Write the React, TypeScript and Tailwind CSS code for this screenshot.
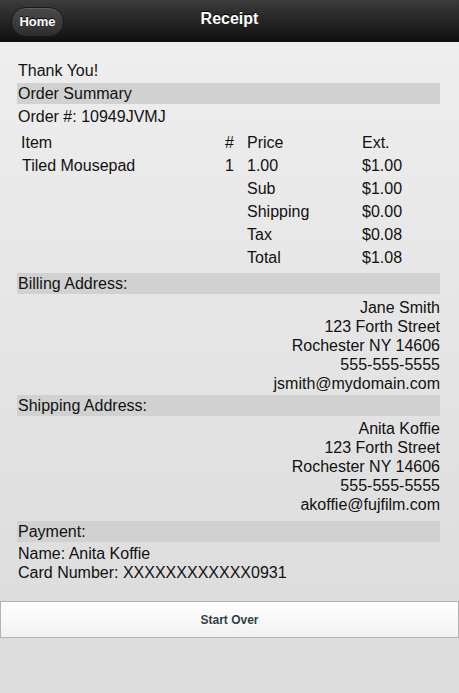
const font = { fontFamily: '"Liberation Sans", Arial, sans-serif' };

type Row = { item?: string; qty?: string; price: string; ext: string };

const rows: Row[] = [
	{ item: "Item", qty: "#", price: "Price", ext: "Ext." },
	{ item: "Tiled Mousepad", qty: "1", price: "1.00", ext: "$1.00" },
	{ price: "Sub", ext: "$1.00" },
	{ price: "Shipping", ext: "$0.00" },
	{ price: "Tax", ext: "$0.08" },
	{ price: "Total", ext: "$1.08" },
];

const billing = [
	"Jane Smith",
	"123 Forth Street",
	"Rochester NY 14606",
	"555-555-5555",
	"jsmith@mydomain.com",
];

const shipping = [
	"Anita Koffie",
	"123 Forth Street",
	"Rochester NY 14606",
	"555-555-5555",
	"akoffie@fujfilm.com",
];

const Bar = ({ label, className }: { label: string; className?: string }) => (
	<div className={`h-[21px] leading-[21px] bg-[#d1d1d1] pl-[1px] ${className ?? ""}`}>
		{label}
	</div>
);

const Address = ({ lines, className }: { lines: string[]; className?: string }) => (
	<div className={`flex flex-col items-end leading-[19px] ${className ?? ""}`}>
		{lines.map((l) => (
			<div key={l}>{l}</div>
		))}
	</div>
);

const App = () => {
	return (
		<div className="min-h-screen w-full bg-[#dddddd] text-[16px] text-[#111]" style={font}>
			{/* header */}
			<div className="relative h-[42px] border-b border-[#111] bg-gradient-to-b from-[#3c3c3c] to-[#111111] flex items-center justify-center">
				<button className="absolute left-[11px] top-[7px] h-[30px] w-[53px] rounded-full border border-[#1a1a1a] bg-gradient-to-b from-[#4a4a4a] to-[#2e2e2e] text-[13px] font-bold text-white shadow-[inset_0_1px_0_rgba(255,255,255,0.1)] [text-shadow:0_-1px_0_#000]">
					Home
				</button>
				<h1 className="text-[16px] font-bold text-white -mt-[3px] [text-shadow:0_-1px_0_#000]">Receipt</h1>
			</div>

			{/* content */}
			<div className="bg-gradient-to-b from-[#eeeeee] to-[#dddddd] pt-[18px] pl-[17px] pr-[19px] pb-[19px]">
				<div className="h-[21px] leading-[21px] pl-[1px]">Thank You!</div>
				<Bar label="Order Summary" className="mt-[2px]" />
				<div className="mt-[2px] h-[21px] leading-[21px] pl-[1px]">Order #: 10949JVMJ</div>

				<div className="mt-[4px] flex flex-col">
					{rows.map((r, i) => (
						<div key={i} className="flex h-[23px] leading-[23px]">
							<div className={`w-[204px] ${i === 0 ? "pl-[4px]" : "pl-[5px]"}`}>{r.item}</div>
							<div className="w-[22px] pl-[4px]">{r.qty}</div>
							<div className="w-[115px] pl-[4px]">{r.price}</div>
							<div className="flex-1 pl-[4px]">{r.ext}</div>
						</div>
					))}
				</div>

				<Bar label="Billing Address:" className="mt-[4px]" />
				<Address lines={billing} className="mt-[4px]" />

				<Bar label="Shipping Address:" className="mt-[2px]" />
				<Address lines={shipping} className="mt-[3px]" />

				<Bar label="Payment:" className="mt-[7px]" />
				<div className="mt-[2px] leading-[19px] pl-[1px]">
					<div>Name: Anita Koffie</div>
					<div>Card Number: XXXXXXXXXXXX0931</div>
				</div>
			</div>

			{/* footer button */}
			<button className="block h-[37px] w-full border border-[#b3b3b3] bg-gradient-to-b from-[#ffffff] to-[#f1f1f1] text-[12px] font-bold text-[#2f3e46] [text-shadow:0_1px_0_#fff]">
				Start Over
			</button>
		</div>
	);
};

export default App;
